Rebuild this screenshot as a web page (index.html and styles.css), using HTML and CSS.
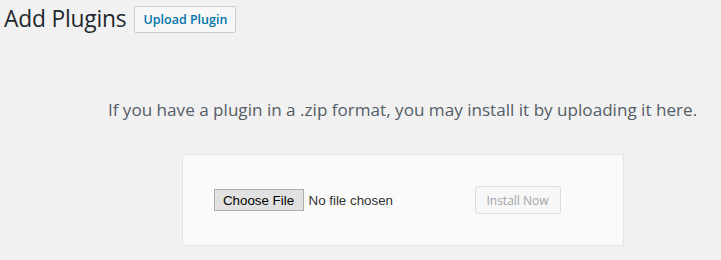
FILE: index.html
```html
<!DOCTYPE html>
<html lang="en">
<head>
<meta charset="utf-8">
<title>Add Plugins</title>
<link rel="stylesheet" href="styles.css">
</head>
<body>
<div class="wrap">
  <div class="page-header">
    <h1 class="page-title">Add Plugins</h1>
    <a class="title-action" href="#">Upload Plugin</a>
  </div>
  <div class="upload-wrap">
    <p class="install-help">If you have a plugin in a .zip format, you may install it by uploading it here.</p>
    <form class="upload-form">
      <div class="file-field">
        <span class="file-btn">Choose File</span>
        <span class="file-name">No file chosen</span>
      </div>
      <button class="install-btn" type="button" disabled>Install Now</button>
    </form>
  </div>
</div>
</body>
</html>
```
FILE: styles.css
```css
html, body {
  margin: 0;
  padding: 0;
}
body {
  background: #f1f1f1;
  font-family: "Open Sans", "Noto Sans", sans-serif;
  color: #444;
  width: 721px;
  height: 260px;
  overflow: hidden;
}
.wrap {
  padding: 0 0 0 4px;
}
.page-header {
  display: flex;
  align-items: center;
  gap: 8px;
  height: 39px;
}
.page-title {
  margin: 0;
  font-size: 22.8px;
  font-weight: 400;
  color: #23282d;
  line-height: 1;
  letter-spacing: -0.2px;
}
.title-action {
  display: inline-flex;
  align-items: center;
  box-sizing: border-box;
  height: 27px;
  padding: 0 8px;
  border: 1px solid #ccc;
  border-radius: 2px;
  background: #f7f7f7;
  color: #0073aa;
  font-size: 12.5px;
  font-weight: 600;
  text-decoration: none;
}
.upload-wrap {
  padding-left: 80px;
  text-align: center;
}
.install-help {
  margin: 59px 0 0;
  font-size: 17.1px;
  line-height: 24px;
  color: #555d66;
}
.upload-form {
  display: inline-flex;
  align-items: center;
  box-sizing: border-box;
  width: 442px;
  height: 92px;
  margin-top: 32px;
  padding: 0 61px 0 31px;
  background: #fafafa;
  border: 1px solid #e5e5e5;
}
.file-field {
  display: flex;
  align-items: center;
  width: 261px;
  font-family: "Liberation Sans", Arial, sans-serif;
  font-size: 13.33px;
}
.file-btn {
  box-sizing: border-box;
  height: 22px;
  width: 90px;
  display: inline-flex;
  align-items: center;
  justify-content: center;
  background: #e1e1e1;
  border: 1px solid #adadad;
  color: #000;
}
.file-name {
  margin-left: 5px;
  color: #333;
}
.install-btn {
  box-sizing: border-box;
  height: 28px;
  width: 86px;
  padding: 0;
  border: 1px solid #ddd;
  border-radius: 3px;
  background: #f7f7f7;
  color: #a0a5aa;
  font-family: "Open Sans", "Noto Sans", sans-serif;
  font-size: 12px;
}
```
